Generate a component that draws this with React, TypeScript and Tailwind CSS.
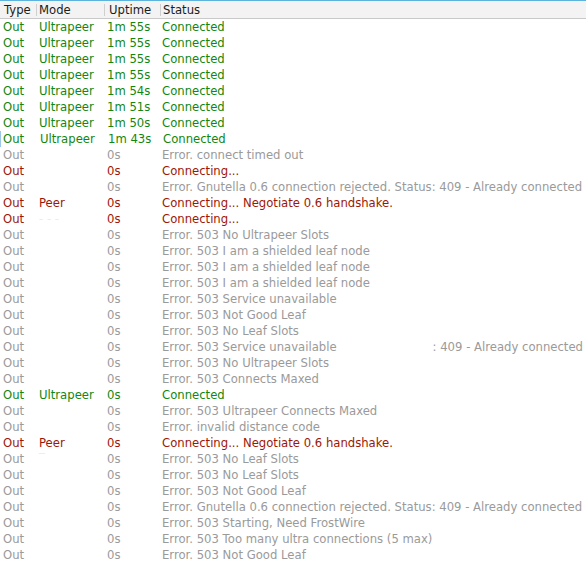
type Kind = "ok" | "busy" | "err";

type Row = {
  kind: Kind;
  mode?: string;
  faint?: boolean;
  uptime: string;
  status: string;
  tail?: string;
  focus?: boolean;
};

const rows: Row[] = [
  { kind: "ok", mode: "Ultrapeer", uptime: "1m 55s", status: "Connected" },
  { kind: "ok", mode: "Ultrapeer", uptime: "1m 55s", status: "Connected" },
  { kind: "ok", mode: "Ultrapeer", uptime: "1m 55s", status: "Connected" },
  { kind: "ok", mode: "Ultrapeer", uptime: "1m 55s", status: "Connected" },
  { kind: "ok", mode: "Ultrapeer", uptime: "1m 54s", status: "Connected" },
  { kind: "ok", mode: "Ultrapeer", uptime: "1m 51s", status: "Connected" },
  { kind: "ok", mode: "Ultrapeer", uptime: "1m 50s", status: "Connected" },
  { kind: "ok", mode: "Ultrapeer", uptime: "1m 43s", status: "Connected", focus: true },
  { kind: "err", uptime: "0s", status: "Error. connect timed out" },
  { kind: "busy", uptime: "0s", status: "Connecting..." },
  { kind: "err", uptime: "0s", status: "Error. Gnutella 0.6 connection rejected. Status: 409 - Already connected" },
  { kind: "busy", mode: "Peer", uptime: "0s", status: "Connecting... Negotiate 0.6 handshake." },
  { kind: "busy", mode: "- - -", faint: true, uptime: "0s", status: "Connecting..." },
  { kind: "err", uptime: "0s", status: "Error. 503 No Ultrapeer Slots" },
  { kind: "err", uptime: "0s", status: "Error. 503 I am a shielded leaf node" },
  { kind: "err", uptime: "0s", status: "Error. 503 I am a shielded leaf node" },
  { kind: "err", uptime: "0s", status: "Error. 503 I am a shielded leaf node" },
  { kind: "err", uptime: "0s", status: "Error. 503 Service unavailable" },
  { kind: "err", uptime: "0s", status: "Error. 503 Not Good Leaf" },
  { kind: "err", uptime: "0s", status: "Error. 503 No Leaf Slots" },
  { kind: "err", uptime: "0s", status: "Error. 503 Service unavailable", tail: ": 409 - Already connected" },
  { kind: "err", uptime: "0s", status: "Error. 503 No Ultrapeer Slots" },
  { kind: "err", uptime: "0s", status: "Error. 503 Connects Maxed" },
  { kind: "ok", mode: "Ultrapeer", uptime: "0s", status: "Connected" },
  { kind: "err", uptime: "0s", status: "Error. 503 Ultrapeer Connects Maxed" },
  { kind: "err", uptime: "0s", status: "Error. invalid distance code" },
  { kind: "busy", mode: "Peer", uptime: "0s", status: "Connecting... Negotiate 0.6 handshake." },
  { kind: "err", mode: "‾", faint: true, uptime: "0s", status: "Error. 503 No Leaf Slots" },
  { kind: "err", uptime: "0s", status: "Error. 503 No Leaf Slots" },
  { kind: "err", uptime: "0s", status: "Error. 503 Not Good Leaf" },
  { kind: "err", uptime: "0s", status: "Error. Gnutella 0.6 connection rejected. Status: 409 - Already connected" },
  { kind: "err", uptime: "0s", status: "Error. 503 Starting, Need FrostWire" },
  { kind: "err", uptime: "0s", status: "Error. 503 Too many ultra connections (5 max)" },
  { kind: "err", uptime: "0s", status: "Error. 503 Not Good Leaf" },
];

const colors: Record<Kind, string> = {
  ok: "text-[#12870f]",
  busy: "text-[#9c1706]",
  err: "text-[#9a9a9a]",
};

function ConnectionRow({ row }: { row: Row }) {
  return (
    <div
      className={`grid grid-cols-[36px_68px_56px_1fr] h-4 items-center whitespace-nowrap ${colors[row.kind]} ${
        row.focus ? "border-l border-[#9cc6e6]" : ""
      }`}
    >
      <span className={row.focus ? "pl-[2px]" : "pl-[3px]"}>Out</span>
      <span className={`pl-[3px] ${row.faint ? "text-[#ececec]" : ""}`}>{row.mode}</span>
      <span className="pl-[3px]">{row.uptime}</span>
      <span className="flex pl-[2px] pr-[3px]">
        {row.status}
        {row.tail && <span className="ml-auto">{row.tail}</span>}
      </span>
    </div>
  );
}

export default function App() {
  return (
    <div
      className="w-[586px] h-[564px] overflow-hidden bg-white text-[11.65px] leading-4"
      style={{ fontFamily: '"DejaVu Sans", Verdana, sans-serif' }}
    >
      <div className="grid grid-cols-[36px_68px_56px_1fr] h-[19px] items-center border-t border-[#5db3dc] border-b border-b-[#c9c9c9] bg-[#f3f3f3] text-[#1c1c1c]">
        <span className="pl-[4px]">Type</span>
        <span className="border-l border-[#cfcfcf] pl-[2px] leading-3">Mode</span>
        <span className="border-l border-[#cfcfcf] pl-[4px] leading-3">Uptime</span>
        <span className="border-l border-[#cfcfcf] pl-[2px] leading-3">Status</span>
      </div>
      <div>
        {rows.map((row, i) => (
          <ConnectionRow key={i} row={row} />
        ))}
      </div>
    </div>
  );
}
